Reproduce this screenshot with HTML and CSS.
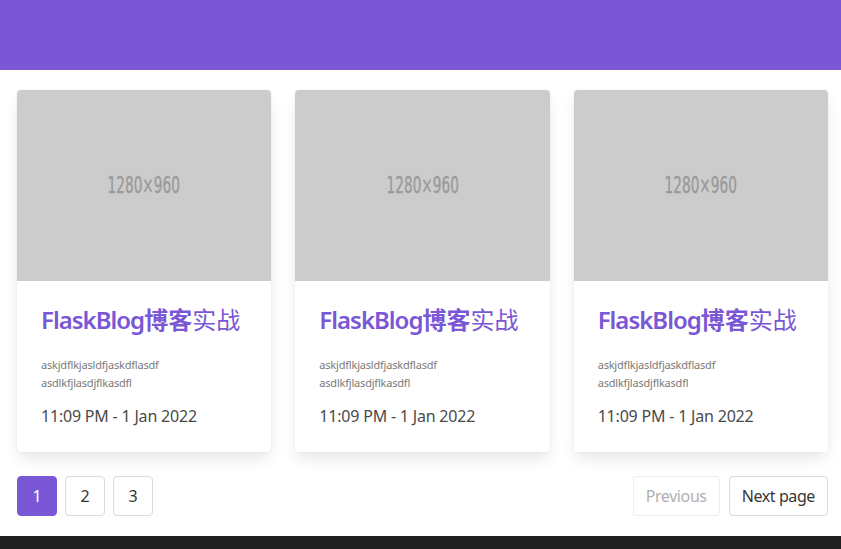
FILE: index.html
```html
<!DOCTYPE html>
<html lang="zh">
<head>
<meta charset="utf-8">
<title>FlaskBlog</title>
<link rel="stylesheet" href="styles.css">
</head>
<body>
<header class="topbar"></header>
<main class="content">
  <div class="cards">
    <article class="card">
      <div class="thumb"><span>1280×960</span></div>
      <div class="card-body">
        <h2 class="title"><span class="latin">FlaskBlog</span>博客<span class="light">实战</span></h2>
        <p class="excerpt">askjdflkjasldfjaskdflasdf<br>asdlkfjlasdjflkasdfl</p>
        <p class="date">11:09 PM - 1 Jan 2022</p>
      </div>
    </article>
    <article class="card">
      <div class="thumb"><span>1280×960</span></div>
      <div class="card-body">
        <h2 class="title"><span class="latin">FlaskBlog</span>博客<span class="light">实战</span></h2>
        <p class="excerpt">askjdflkjasldfjaskdflasdf<br>asdlkfjlasdjflkasdfl</p>
        <p class="date">11:09 PM - 1 Jan 2022</p>
      </div>
    </article>
    <article class="card">
      <div class="thumb"><span>1280×960</span></div>
      <div class="card-body">
        <h2 class="title"><span class="latin">FlaskBlog</span>博客<span class="light">实战</span></h2>
        <p class="excerpt">askjdflkjasldfjaskdflasdf<br>asdlkfjlasdjflkasdfl</p>
        <p class="date">11:09 PM - 1 Jan 2022</p>
      </div>
    </article>
  </div>
  <nav class="pagination">
    <div class="pages">
      <a class="page current">1</a>
      <a class="page">2</a>
      <a class="page">3</a>
    </div>
    <div class="nav-buttons">
      <a class="page wide disabled">Previous</a>
      <a class="page wide">Next page</a>
    </div>
  </nav>
</main>
<footer class="footer"></footer>
</body>
</html>
```
FILE: styles.css
```css
* { box-sizing: border-box; }
html, body { margin: 0; padding: 0; }
body {
  font-family: "Noto Sans", "Noto Sans CJK SC", sans-serif;
  color: #4a4a4a;
  background: #fff;
  font-size: 16px;
}
.topbar {
  height: 70px;
  background: #7957d5;
}
.content {
  padding: 20px 13px 20px 17px;
}
.cards {
  display: grid;
  grid-template-columns: repeat(3, 1fr);
  column-gap: 24px;
}
.card {
  background: #fff;
  border-radius: 4px;
  overflow: hidden;
  box-shadow: 0 8px 16px -2px rgba(10,10,10,0.1), 0 0 0 1px rgba(10,10,10,0.02);
}
.thumb {
  aspect-ratio: 4 / 3;
  background: #cccccc;
  display: flex;
  align-items: center;
  justify-content: center;
}
.thumb span {
  display: inline-block;
  font-family: "DejaVu Sans Condensed", "DejaVu Sans", sans-serif;
  font-stretch: condensed;
  font-size: 23px;
  font-weight: 500;
  color: #9a9a9a;
  transform: scaleX(0.66);
  white-space: nowrap;
  -webkit-text-stroke: 0.4px #9a9a9a;
}
.card-body {
  padding: 24px 24px 24px;
}
.title {
  margin: 0;
  font-size: 24px;
  font-weight: 600;
  color: #7957d5;
  line-height: 30px;
  white-space: nowrap;
}
.title .latin { letter-spacing: -1px; }
.title .light { font-weight: 400; }
.excerpt {
  margin: 21px 0 0;
  font-size: 11px;
  letter-spacing: -0.2px;
  line-height: 18px;
  color: #7a7a7a;
}
.date {
  margin: 12px 0 0;
  font-size: 16px;
  letter-spacing: -0.2px;
  line-height: 24px;
  color: #4a4a4a;
}
.pagination {
  display: flex;
  justify-content: space-between;
  margin-top: 24px;
}
.pages, .nav-buttons {
  display: flex;
  gap: 8px;
}
.nav-buttons { gap: 9px; }
.page {
  height: 40px;
  min-width: 40px;
  padding: 0 12px;
  border: 1px solid #dbdbdb;
  border-radius: 4px;
  display: flex;
  align-items: center;
  justify-content: center;
  font-size: 16px;
  letter-spacing: -0.4px;
  color: #363636;
  background: #fff;
}
.page.current {
  background: #7957d5;
  border-color: #7957d5;
  color: #fff;
}
.page.disabled {
  color: #b0b0b0;
  border-color: #ededed;
}
.footer {
  height: 40px;
  background: #212121;
}
```
